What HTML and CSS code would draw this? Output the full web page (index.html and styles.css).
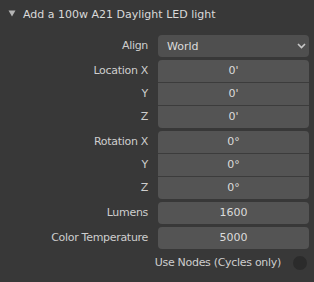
FILE: index.html
```html
<!DOCTYPE html>
<html lang="en">
<head>
    <meta charset="UTF-8">
    <title>Add light</title>
    <link rel="stylesheet" href="styles.css">
</head>
<body>
<div class="panel">
    <div class="header">
        <svg class="arrow" width="8" height="7" viewBox="0 0 8 7"><polygon points="0.5,0.5 7.5,0.5 4,6.5" fill="#b4b4b4"/></svg>
        <span>Add a 100w A21 Daylight LED light</span>
    </div>
    <div class="content">
        <div class="group">
            <div class="labels"><div class="label">Align</div></div>
            <div class="select">
                <span>World</span>
                <svg width="9" height="6" viewBox="0 0 9 6"><polyline points="1,1 4.5,4.5 8,1" fill="none" stroke="#c8c8c8" stroke-width="1.6"/></svg>
            </div>
        </div>
        <div class="group">
            <div class="labels">
                <div class="label">Location X</div>
                <div class="label">Y</div>
                <div class="label">Z</div>
            </div>
            <div class="fields">
                <div class="field">0'</div>
                <div class="field">0'</div>
                <div class="field">0'</div>
            </div>
        </div>
        <div class="group">
            <div class="labels">
                <div class="label">Rotation X</div>
                <div class="label">Y</div>
                <div class="label">Z</div>
            </div>
            <div class="fields">
                <div class="field">0°</div>
                <div class="field">0°</div>
                <div class="field">0°</div>
            </div>
        </div>
        <div class="group">
            <div class="labels"><div class="label">Lumens</div></div>
            <div class="fields"><div class="field">1600</div></div>
        </div>
        <div class="group">
            <div class="labels"><div class="label">Color Temperature</div></div>
            <div class="fields"><div class="field">5000</div></div>
        </div>
        <div class="toggle-row">
            <span class="label">Use Nodes (Cycles only)</span>
            <span class="toggle"></span>
        </div>
    </div>
</div>
</body>
</html>
```
FILE: styles.css
```css
body {
    margin: 0;
    background-color: #383838;
    font-family: "DejaVu Sans", sans-serif;
    font-size: 11px;
    color: #d4d4d4;
}

.panel {
    width: 314px;
}

.header {
    height: 28px;
    display: flex;
    align-items: center;
    color: #dadada;
}

.arrow {
    margin-left: 8px;
    margin-right: 7px;
    margin-top: -1px;
}

.content {
    padding: 7px 5px 0 0;
    display: flex;
    flex-direction: column;
    gap: 3px;
}

.group {
    display: flex;
    gap: 10px;
}

.labels {
    width: 148px;
    display: flex;
    flex-direction: column;
    gap: 1px;
}

.label {
    height: 22px;
    line-height: 22px;
    text-align: right;
    letter-spacing: -0.3px;
    color: #cecece;
}

.fields {
    flex: 1;
    display: flex;
    flex-direction: column;
    gap: 1px;
    background-color: #3c3c3c;
    border-radius: 4px;
    overflow: hidden;
}

.field {
    height: 22px;
    line-height: 22px;
    background-color: #545454;
    text-align: center;
    color: #dcdcdc;
}

.select {
    flex: 1;
    height: 22px;
    display: flex;
    align-items: center;
    justify-content: space-between;
    padding: 0 3px 0 9px;
    background-color: #4f4f4f;
    border-radius: 4px;
    color: #dcdcdc;
}

.toggle-row {
    height: 22px;
    display: flex;
    align-items: center;
    justify-content: flex-end;
    gap: 12px;
    padding-right: 2px;
}

.toggle {
    width: 14px;
    height: 14px;
    border-radius: 50%;
    background-color: #2b2b2b;
}
```
